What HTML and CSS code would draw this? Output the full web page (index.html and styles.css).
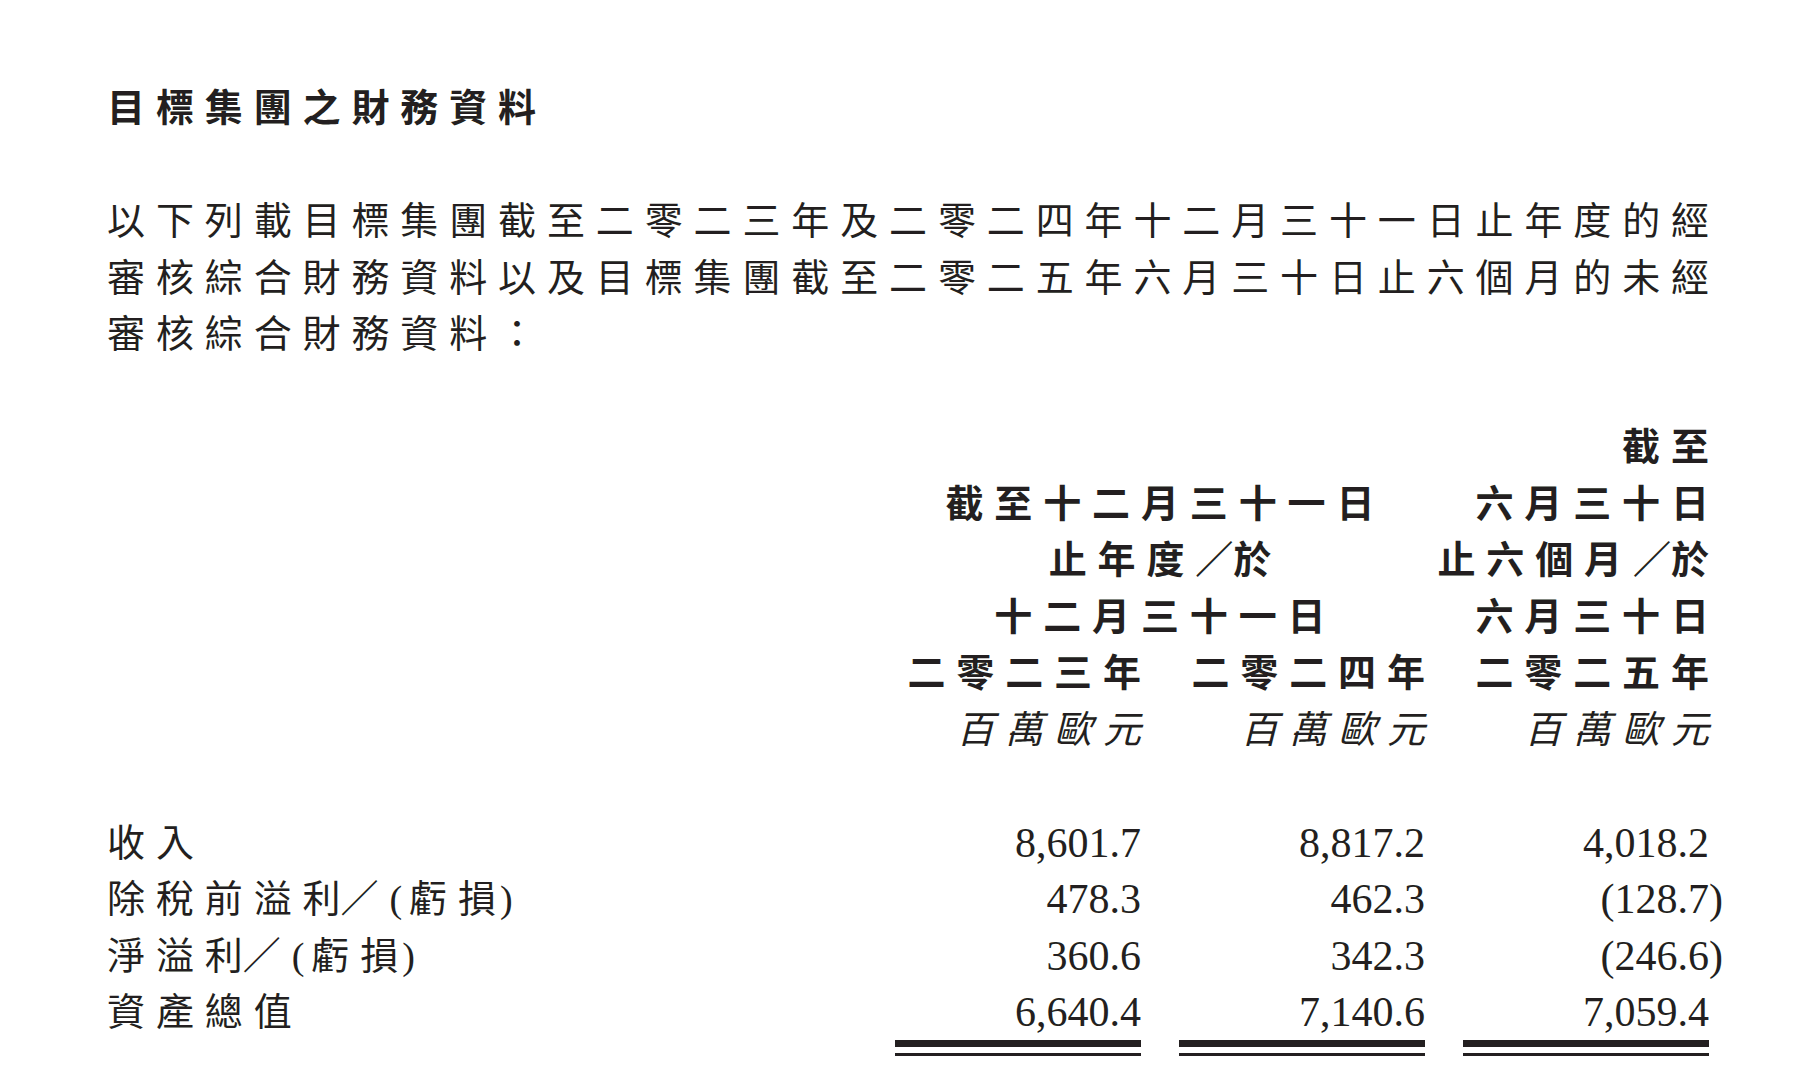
FILE: index.html
```html
<!DOCTYPE html>
<html lang="zh-Hant">
<head>
<meta charset="utf-8">
<title>目標集團之財務資料</title>
<link rel="stylesheet" href="styles.css">
</head>
<body>
<main class="page">
  <h1 class="title">目標集團之財務資料</h1>

  <p class="intro">以下列載目標集團截至二零二三年及二零二四年十二月三十一日止年度的經審核綜合財務資料以及目標集團截至二零二五年六月三十日止六個月的未經審核綜合財務資料：</p>

  <div class="fin fin-head">
    <div class="hc c3">截至</div>

    <div class="hc c12">截至十二月三十一日</div>
    <div class="hc c3">六月三十日</div>

    <div class="hc c12">止年度<span class="tight">／</span>於</div>
    <div class="hc c3">止六個月<span class="tight">／</span>於</div>

    <div class="hc c12">十二月三十一日</div>
    <div class="hc c3">六月三十日</div>

    <div class="hc c1">二零二三年</div>
    <div class="hc c2">二零二四年</div>
    <div class="hc c3">二零二五年</div>

    <div class="hc unit c1">百萬歐元</div>
    <div class="hc unit c2">百萬歐元</div>
    <div class="hc unit c3">百萬歐元</div>
  </div>

  <div class="fin fin-body">
    <div class="label">收入</div>
    <div class="num">8,601.7</div>
    <div class="num">8,817.2</div>
    <div class="num">4,018.2</div>

    <div class="label">除稅前溢<span class="tight">利</span>／<span class="open">(</span>虧<span class="near">損</span><span class="close">)</span></div>
    <div class="num">478.3</div>
    <div class="num">462.3</div>
    <div class="num">(128.7<span class="hang">)</span></div>

    <div class="label">淨溢<span class="tight">利</span>／<span class="open">(</span>虧<span class="near">損</span><span class="close">)</span></div>
    <div class="num">360.6</div>
    <div class="num">342.3</div>
    <div class="num">(246.6<span class="hang">)</span></div>

    <div class="label">資產總值</div>
    <div class="num">6,640.4</div>
    <div class="num">7,140.6</div>
    <div class="num">7,059.4</div>

    <div class="rule c1"></div>
    <div class="rule c2"></div>
    <div class="rule c3"></div>
  </div>
</main>
</body>
</html>
```

FILE: styles.css
```css
:root {
  --ink: #231f20;
  --cjk: 38px;
  --ls: 10.875px;
  --lh: 56.5px;
}

html, body {
  margin: 0;
  padding: 0;
  background: #ffffff;
}

body {
  color: var(--ink);
  font-family: "Noto Sans CJK TC", "Noto Sans CJK SC", sans-serif;
  font-size: var(--cjk);
  line-height: var(--lh);
}

.page {
  width: 1602px;
  padding: 77px 0 0 107px;
}

.title {
  margin: 0;
  font-size: var(--cjk);
  font-weight: 700;
  letter-spacing: var(--ls);
  line-height: var(--lh);
}

.intro {
  margin: var(--lh) -14px 0 0;
  letter-spacing: var(--ls);
}

.fin {
  display: grid;
  grid-template-columns: 1fr 246px 246px 246px;
  column-gap: 38px;
}

.fin-head {
  margin-top: var(--lh);
  font-weight: 700;
}

.fin-body {
  margin-top: var(--lh);
}

.hc {
  justify-self: end;
  text-align: right;
  letter-spacing: var(--ls);
  margin-right: calc(-1 * var(--ls));
  white-space: nowrap;
}

.c1 { grid-column: 2; }
.c2 { grid-column: 3; }
.c3 { grid-column: 4; }

.c12 {
  grid-column: 2 / 4;
  justify-self: center;
  text-align: center;
  margin-right: 0;
  margin-left: var(--ls);
}

.tight {
  letter-spacing: 0;
}

.unit {
  font-weight: 400;
  font-style: italic;
}

.label {
  grid-column: 1;
  height: var(--lh);
  letter-spacing: var(--ls);
  white-space: nowrap;
}

.label .open,
.label .close {
  font-family: "Liberation Serif", "Times New Roman", serif;
  line-height: 0;
}

.label .open {
  letter-spacing: 7px;
}

.label .near {
  letter-spacing: 4px;
}

.label .close {
  letter-spacing: 0;
}

.num {
  text-align: right;
  font-family: "Liberation Serif", "Times New Roman", serif;
  font-size: 42px;
  white-space: nowrap;
  padding-top: 3px;
  margin-bottom: -3px;
}

.hang {
  margin-right: -0.333em;
}

.rule {
  height: 6px;
  margin-top: 2px;
  border-top: 7px solid var(--ink);
  border-bottom: 3px solid var(--ink);
}
```
